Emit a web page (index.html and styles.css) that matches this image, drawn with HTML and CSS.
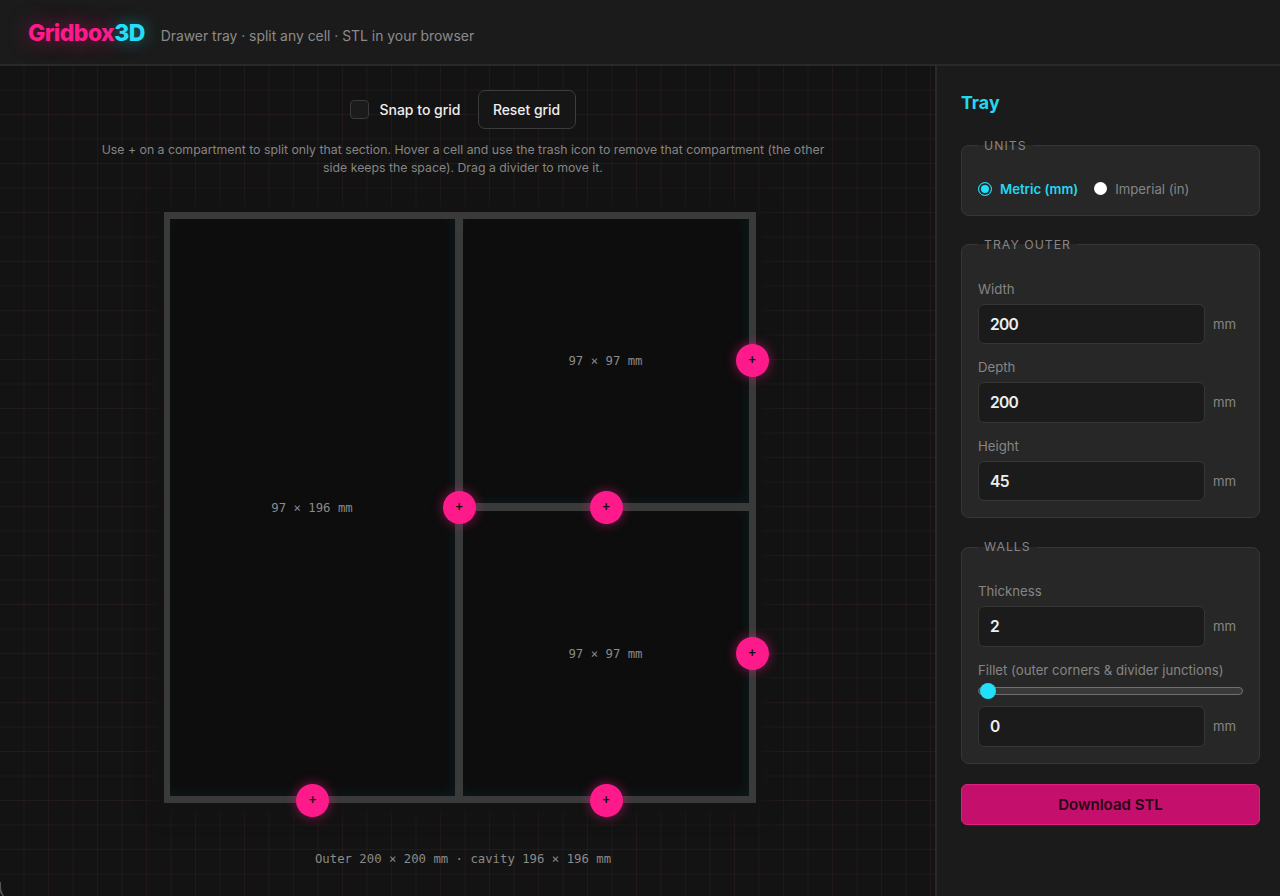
FILE: index.html
```
<!DOCTYPE html>
<html lang="en">
<head>
  <meta charset="UTF-8" />
  <title>Gridbox3D</title>
  <link rel="stylesheet" href="styles.css">
</head>
<body>

  <header class="header">
    <h1 class="logo">Gridbox<span>3D</span></h1>
    <p class="tagline">Drawer tray · split any cell · STL in your browser</p>
  </header>

  <div class="layout">
    <main class="editor">
      <div class="toolbar">
        <label class="snap"><input type="checkbox" class="checkbox"><span>Snap to grid</span></label>
        <button type="button" class="reset">Reset grid</button>
      </div>
      <p class="hint">Use + on a compartment to split only that section. Hover a cell and use the trash icon to remove that compartment (the other<br>side keeps the space). Drag a divider to move it.</p>

      <div class="tray">
        <div class="cell tall"><span>97 × 196 mm</span>
          <button class="split right">+</button><button class="split bottom">+</button></div>
        <div class="cell"><span>97 × 97 mm</span>
          <button class="split right edge">+</button><button class="split bottom">+</button></div>
        <div class="cell"><span>97 × 97 mm</span>
          <button class="split right edge">+</button><button class="split bottom">+</button></div>
      </div>

      <p class="summary">Outer 200 × 200 mm · cavity 196 × 196 mm</p>
    </main>

    <aside class="sidebar">
      <h2 class="title">Tray</h2>

      <fieldset class="group units">
        <legend>Units</legend>
        <label class="unit-option active"><input type="radio" name="units" class="radio" checked><span>Metric (mm)</span></label>
        <label class="unit-option"><input type="radio" name="units" class="radio"><span>Imperial (in)</span></label>
      </fieldset>

      <fieldset class="group">
        <legend>Tray outer</legend>
        <label class="field">Width
          <span class="row"><input class="number" value="200"><span class="suffix">mm</span></span></label>
        <label class="field">Depth
          <span class="row"><input class="number" value="200"><span class="suffix">mm</span></span></label>
        <label class="field">Height
          <span class="row"><input class="number" value="45"><span class="suffix">mm</span></span></label>
      </fieldset>

      <fieldset class="group">
        <legend>Walls</legend>
        <label class="field">Thickness
          <span class="row"><input class="number" value="2"><span class="suffix">mm</span></span></label>
        <div class="field"><span class="wide-label">Fillet (outer corners &amp; divider junctions)</span>
          <input type="range" class="slider" min="0" max="10" value="0">
          <span class="row"><input class="number" value="0"><span class="suffix">mm</span></span></div>
      </fieldset>

      <button type="button" class="download">Download STL</button>
    </aside>
  </div>

</body>
</html>
```
FILE: styles.css
```
* {
  box-sizing: border-box;
}

body {
  margin: 0;
  height: 896px;
  overflow: hidden;
  position: relative;
  display: flex;
  flex-direction: column;
  background: #131313;
  color: #eee;
  font-family: Inter, "Liberation Sans", sans-serif;
}

/* rounded window corner */
body::after {
  content: "";
  position: absolute;
  left: -1px;
  bottom: -6px;
  width: 22px;
  height: 20px;
  border-left: 2px solid #555;
  border-bottom-left-radius: 16px;
}

h1, h2, p {
  margin: 0;
}

button, input {
  font-family: inherit;
}

.header {
  height: 66px;
  flex: none;
  display: flex;
  align-items: baseline;
  gap: 16px;
  padding: 19px 28px 0;
  background: #1b1b1b;
  border-bottom: 2px solid #292929;
}

.logo {
  font-size: 23px;
  line-height: 29px;
  font-weight: 800;
  letter-spacing: -0.6px;
  color: #ff1a8c;
  text-shadow: 0 0 20px rgba(255, 26, 140, 0.5);
}

.logo span {
  color: #22e0fa;
  text-shadow: 0 0 16px rgba(34, 224, 250, 0.5);
}

.tagline {
  font-size: 13.9px;
  color: #8b8b8b;
}

.layout {
  flex: 1;
  display: flex;
}

.editor {
  width: 935px;
  padding: 24px 9px 0 0;
  display: flex;
  flex-direction: column;
  align-items: center;
  background-color: #131313;
  background-image:
    linear-gradient(to right, rgba(255, 120, 130, 0.06) 1px, transparent 1px),
    linear-gradient(to bottom, rgba(255, 130, 140, 0.06) 1px, transparent 1px);
  background-size: 24.5px 24.5px;
  background-position: -1px -1px;
}

.toolbar {
  display: flex;
  align-items: center;
  gap: 17px;
}

.snap {
  display: flex;
  align-items: center;
  gap: 10px;
  font-size: 14px;
  font-weight: 500;
}

.checkbox {
  appearance: none;
  width: 19px;
  height: 19px;
  margin: 0;
  background: #1b1b1b;
  border: 1px solid #3a3a3a;
  border-radius: 4px;
}

.reset {
  width: 98px;
  height: 39px;
  padding: 0;
  background: #161616;
  color: #eee;
  border: 1px solid #3c3c3c;
  border-radius: 7px;
  font-size: 13.9px;
  font-weight: 500;
}

.hint {
  margin-top: 12px;
  font-size: 12.3px;
  line-height: 17.5px;
  text-align: center;
  white-space: nowrap;
  color: #858585;
}

.tray {
  width: 592px;
  height: 591px;
  margin: 36px 7px 0 0;
  padding: 7px 7px 7px 6px;
  display: grid;
  grid-template-columns: 285px 286px;
  grid-template-rows: 284px 285px;
  gap: 8px;
  background: #3a3a3a;
  box-shadow: 0 3px 14px 9px #131313;
}

.cell {
  position: relative;
  display: flex;
  align-items: center;
  justify-content: center;
  background: #0d0d0d;
  box-shadow: inset -3px -3px 12px rgba(0, 229, 255, 0.055);
  font: 12.3px "DejaVu Sans Mono", monospace;
  color: #8a8a8a;
}

.tall {
  grid-row: span 2;
}

/* split handles sit on top of the walls */
.split {
  position: absolute;
  z-index: 1;
  width: 33px;
  height: 33px;
  padding: 0;
  border: none;
  border-radius: 50%;
  background: #ff1a8c;
  color: #111;
  font-size: 12px;
  font-weight: 600;
  line-height: 33px;
  box-shadow: 0 0 12px rgba(255, 26, 140, 0.5);
}

.right {
  right: -21px;
  top: calc(50% - 17px);
}

.edge {
  right: -20px;
}

.bottom {
  bottom: -21px;
  left: calc(50% - 16px);
}

.summary {
  margin-top: 48px;
  font: 12.3px/16px "DejaVu Sans Mono", monospace;
  color: #8a8a8a;
}

.sidebar {
  flex: 1;
  padding: 25px 20px 0 24px;
  background: #1b1b1b;
  border-left: 2px solid #292929;
}

.title {
  font-size: 17.8px;
  line-height: 24px;
  font-weight: 700;
  color: #22d8f0;
}

.group {
  min-width: 0;
  margin: 0 0 20px;
  padding: 26px 16px 16px;
  background: #272727;
  border: 1px solid #363636;
  border-radius: 8px;
}

.title + .group {
  margin-top: 21.5px;
}

.group legend {
  padding: 0 6px;
  font-size: 12.3px;
  line-height: 18px;
  letter-spacing: 1px;
  text-transform: uppercase;
  color: #858585;
}

.units {
  display: flex;
  gap: 16px;
  padding-top: 25px;
  padding-bottom: 17px;
}

.unit-option {
  display: flex;
  align-items: center;
  gap: 8px;
  font-size: 13.2px;
  line-height: 18px;
  color: #858585;
}

.active {
  font-weight: 600;
  color: #22d8f0;
}

.radio {
  appearance: none;
  width: 13px;
  height: 13px;
  margin: 0;
  border-radius: 50%;
  background: #fff;
}

.radio:checked {
  width: 14px;
  height: 14px;
  border: 1.5px solid #22d8f0;
  background: #22e0fa;
  box-shadow: inset 0 0 0 2px #272727;
}

.field {
  display: block;
  margin-bottom: 14px;
  font-size: 13.2px;
  line-height: 18px;
  color: #858585;
}

.field:last-child {
  margin-bottom: 0;
}

.wide-label {
  display: block;
}

.row {
  display: flex;
  align-items: center;
  gap: 8px;
  margin-top: 6px;
}

.number {
  width: 227px;
  height: 40.5px;
  padding: 1px 11px 0;
  background: #1b1b1b;
  border: 1px solid #363636;
  border-radius: 6px;
  color: #eee;
  font-size: 15.6px;
  font-weight: 600;
  letter-spacing: -0.7px;
}

.slider {
  appearance: none;
  display: block;
  width: 100%;
  height: 8px;
  margin: 8.5px 0 11px;
  background: #3a3a3a;
  border: 1px solid #707070;
  border-radius: 5px;
}

.slider::-webkit-slider-thumb {
  appearance: none;
  width: 16px;
  height: 16px;
  margin-left: 1px;
  border-radius: 50%;
  background: #22e0fa;
}

.slider + .row {
  margin-top: 0;
}

.download {
  display: block;
  width: 100%;
  height: 41px;
  background: #c4106c;
  border: 1px solid #e0207f;
  border-radius: 6px;
  color: #240615;
  font-size: 15px;
  font-weight: 600;
}
```
